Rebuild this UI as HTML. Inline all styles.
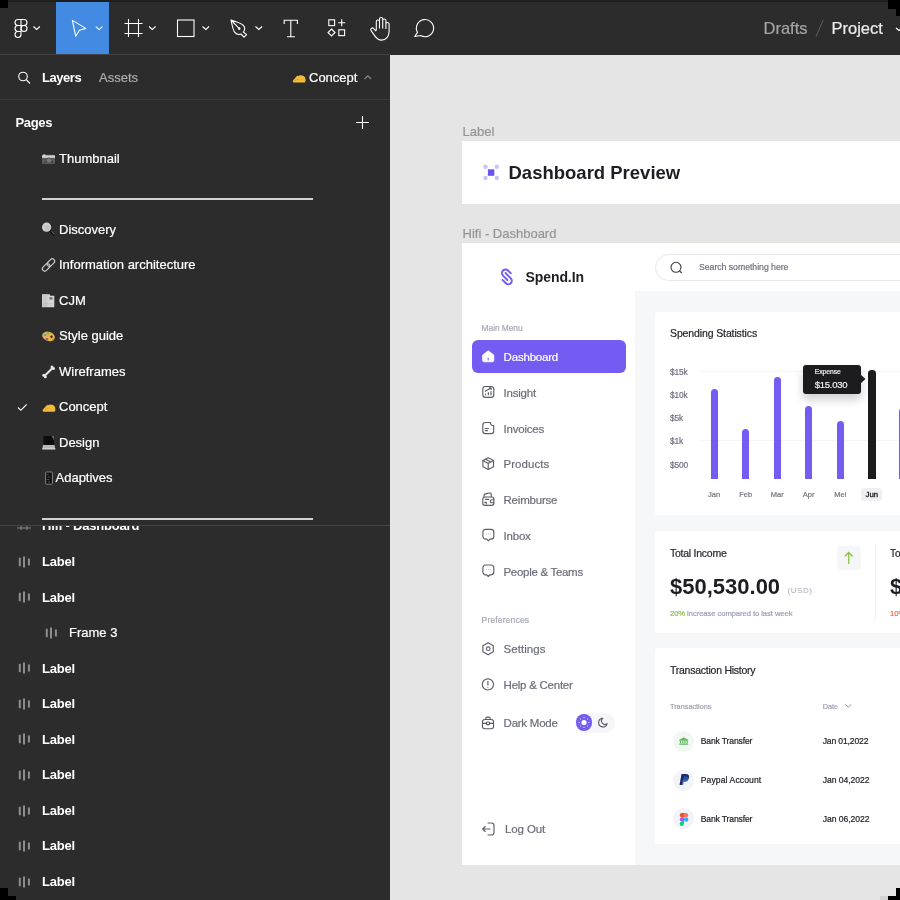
<!DOCTYPE html>
<html><head><meta charset="utf-8">
<style>
*{margin:0;padding:0;box-sizing:border-box}
html,body{width:900px;height:900px;overflow:hidden;background:#2c2c2c;font-family:"Liberation Sans",sans-serif;-webkit-font-smoothing:antialiased}

.a{position:absolute}
.t{position:absolute;white-space:nowrap;line-height:1;-webkit-text-stroke:0.2px currentColor}
svg{position:absolute;overflow:visible}
.ic{stroke:#fff;fill:none;stroke-width:1.1}
</style></head><body><div id="root" style="position:absolute;left:0;top:0;width:900px;height:900px;will-change:transform">
<!-- TOOLBAR -->
<div class="a" style="left:0;top:0;width:900px;height:54px;background:#2c2c2c"></div>
<div class="a" style="left:0;top:0;width:900px;height:1.5px;background:#1e1e1e"></div>
<div class="a" style="left:0;top:54px;width:390px;height:1px;background:#444"></div>
<div class="a" style="left:0;top:0;width:8px;height:7.5px;background:#000"></div>
<div class="a" style="left:888px;top:0;width:12px;height:9px;background:#000"></div><div class="a" style="left:896.3px;top:0;width:4px;height:15.8px;background:#000"></div>
<div class="a" style="left:56px;top:2px;width:53px;height:52px;background:#438ae2"></div>

<!-- figma logo -->
<svg style="left:0;top:0" width="60" height="55" class="ic">
  <path d="M21 19.5h3a3 3 0 0 1 0 6h-3zM21 19.5h-3a3 3 0 0 0 0 6h3zM21 25.5h-3a3 3 0 0 0 0 6h3zM21 31.5h-3a3 3 0 1 0 3 3zM21 25.5v6" class="ic"/>
  <circle cx="24" cy="28.5" r="3" class="ic"/>
  <path d="M33.5 26.5l3.2 3 3.2-3" class="ic"/>
</svg>
<!-- move -->
<svg style="left:0;top:0" width="120" height="55">
  <path d="M72.4 20.4L85.8 28.4L79.4 30.2L75.7 36.3z" class="ic" stroke-linejoin="round" stroke-width="1.2"/>
  <path d="M95.8 26.6l3.3 3 3.3-3" class="ic"/>
</svg>
<!-- frame -->
<svg style="left:0;top:0" width="300" height="55">
  <path d="M128.5 19v18M138.5 19v18M124.5 23.5h18M124.5 33.5h18" class="ic" stroke-width="1.15"/>
  <path d="M149 26.5l3.3 3 3.3-3" class="ic"/>
  <rect x="177.5" y="20" width="16.5" height="16.5" class="ic"/>
  <path d="M202.5 26.5l3.3 3 3.3-3" class="ic"/>
  <path d="M231 20C236 21.5 241 23 243.3 25.3C245.3 27.5 245 30 243.3 32L246.6 34.6L244 37.2L241 34C238.7 35 236.2 34.2 234.6 32.2C233 30 232 25 231 20zM231 20L238.8 28.2" class="ic" stroke-linejoin="round"/>
  <circle cx="239.2" cy="28.6" r="1.3" fill="#fff"/>
  <path d="M255.5 26.5l3.3 3 3.3-3" class="ic"/>
</svg>
<svg style="left:0;top:0" width="450" height="55">
  <path d="M284.2 24V20.2H297.4V24M290.8 20.2V36.7M287 36.7H295" class="ic" stroke-width="1.3"/>
  <rect x="328.8" y="19.8" width="5.8" height="5.8" class="ic"/>
  <path d="M341.7 19.3v7M338.2 22.8h7" class="ic"/>
  <path d="M331.5 29l3.5 3.5-3.5 3.5-3.5-3.5z" class="ic"/>
  <rect x="338.8" y="29.8" width="5.8" height="5.8" class="ic"/>
  <g transform="translate(-0.7,0.6)"><path d="M377 30v-9a1.6 1.6 0 0 1 3.2 0v7M380.2 27.5v-9a1.6 1.6 0 0 1 3.2 0v9M383.4 28v-8a1.6 1.6 0 0 1 3.2 0v8.5M386.6 28.5v-5a1.6 1.6 0 0 1 3.2 0v7.5c0 5-3 8.5-7.5 8.5c-3 0-5-1.5-7-4.5l-3.5-5a1.6 1.6 0 0 1 2.5-2l2.5 2.5" class="ic" stroke-linejoin="round"/></g>
  <path d="M414.7 36.5L417.55 32.4A8.6 8.6 0 1 1 420.7 35.55Z" class="ic" stroke-linejoin="round" stroke-width="1.2"/>
</svg>
<svg style="left:0;top:0" width="900" height="55"><path d="M816 36.7l7.3-17" stroke="#5e5e5e" stroke-width="1"/><path d="M896 28l3 2.5 3-2.5" class="ic"/></svg>

<div class="t" style="left:763.5px;top:20.33px;font-size:16.5px;color:#a5a5a5;">Drafts</div>
<div class="t" style="left:831.5px;top:20.33px;font-size:16.5px;color:#ececec;">Project</div>
<div class="a" style="left:0px;top:55px;width:390px;height:845px;background:#2c2c2c;"></div>
<div class="a" style="left:0px;top:54px;width:390px;height:1px;background:#444;"></div>
<div class="a" style="left:390px;top:55px;width:510px;height:845px;background:#e5e5e5;"></div>
<div class="a" style="left:0px;top:99.2px;width:390px;height:1.3px;background:#3b3b3b;"></div>
<svg style="left:0;top:0" width="390" height="140"><circle cx="23" cy="76.5" r="4.3" class="ic" stroke-width="1.3"/><path d="M26.2 79.7l3.8 3.8" class="ic" stroke-width="1.3"/><path d="M364.5 79l3.3-3.2 3.3 3.2" stroke="#8a8a8a" fill="none" stroke-width="1.1"/><path d="M362.5 116v13M356 122.5h13" class="ic" stroke-width="1.2"/></svg>
<div class="t" style="left:42px;top:71.00px;font-size:13px;color:#fff;font-weight:bold;-webkit-text-stroke:0;letter-spacing:-0.45px;">Layers</div>
<div class="t" style="left:99px;top:71.00px;font-size:13px;color:#acacac;">Assets</div>
<div class="t" style="left:309px;top:71.00px;font-size:13px;color:#fff;">Concept</div>
<div class="t" style="left:15.5px;top:116.00px;font-size:13px;color:#fff;font-weight:bold;-webkit-text-stroke:0;letter-spacing:-0.35px;">Pages</div>
<div class="t" style="left:59px;top:151.50px;font-size:13px;color:#fff;">Thumbnail</div>
<div class="a" style="left:42px;top:198.0px;width:271px;height:2px;background:#d2d2d2;"></div>
<div class="t" style="left:59px;top:222.60px;font-size:13px;color:#fff;">Discovery</div>
<div class="t" style="left:59px;top:258.15px;font-size:13px;color:#fff;">Information architecture</div>
<div class="t" style="left:59px;top:293.70px;font-size:13px;color:#fff;">CJM</div>
<div class="t" style="left:59px;top:329.25px;font-size:13px;color:#fff;">Style guide</div>
<div class="t" style="left:59px;top:364.80px;font-size:13px;color:#fff;">Wireframes</div>
<div class="t" style="left:59px;top:400.35px;font-size:13px;color:#fff;">Concept</div>
<div class="t" style="left:59px;top:435.90px;font-size:13px;color:#fff;">Design</div>
<div class="t" style="left:55.5px;top:471.45px;font-size:13px;color:#fff;">Adaptives</div>
<div class="a" style="left:42px;top:518.2px;width:271px;height:2px;background:#d2d2d2;"></div>
<svg style="left:0;top:0" width="60" height="420"><path d="M18 407.5l2.8 2.8 5.8-5.8" class="ic" stroke-width="1.9"/></svg>
<div class="a" style="left:0px;top:525px;width:390px;height:1px;background:#444;"></div>
<div class="a" style="left:0;top:526px;width:390px;height:10px;overflow:hidden"><div class="t" style="left:42px;top:-6.60px;font-size:13px;color:#fff;font-weight:bold;-webkit-text-stroke:0;letter-spacing:-0.2px;">Hifi - Dashboard</div>
<svg style="left:0;top:0" width="40" height="10"><path d="M21 -5v9M27 -5v9M17 -2h14M17 2h14" stroke="#888" stroke-width="1"/></svg></div>
<div class="t" style="left:42px;top:555.00px;font-size:13px;color:#fff;font-weight:bold;-webkit-text-stroke:0;letter-spacing:-0.2px;">Label</div>
<svg style="left:18px;top:555.70px" width="14" height="12"><path d="M1.8 1.8v8.5M6 0.5v11M10.9 2.5v7" stroke="#8d8d8d" stroke-width="2"/></svg>
<div class="t" style="left:42px;top:590.55px;font-size:13px;color:#fff;font-weight:bold;-webkit-text-stroke:0;letter-spacing:-0.2px;">Label</div>
<svg style="left:18px;top:591.25px" width="14" height="12"><path d="M1.8 1.8v8.5M6 0.5v11M10.9 2.5v7" stroke="#8d8d8d" stroke-width="2"/></svg>
<div class="t" style="left:69px;top:626.10px;font-size:13px;color:#fff;">Frame 3</div>
<svg style="left:45px;top:626.80px" width="14" height="12"><path d="M1.8 1.8v8.5M6 0.5v11M10.9 2.5v7" stroke="#8d8d8d" stroke-width="2"/></svg>
<div class="t" style="left:42px;top:661.65px;font-size:13px;color:#fff;font-weight:bold;-webkit-text-stroke:0;letter-spacing:-0.2px;">Label</div>
<svg style="left:18px;top:662.35px" width="14" height="12"><path d="M1.8 1.8v8.5M6 0.5v11M10.9 2.5v7" stroke="#8d8d8d" stroke-width="2"/></svg>
<div class="t" style="left:42px;top:697.20px;font-size:13px;color:#fff;font-weight:bold;-webkit-text-stroke:0;letter-spacing:-0.2px;">Label</div>
<svg style="left:18px;top:697.90px" width="14" height="12"><path d="M1.8 1.8v8.5M6 0.5v11M10.9 2.5v7" stroke="#8d8d8d" stroke-width="2"/></svg>
<div class="t" style="left:42px;top:732.75px;font-size:13px;color:#fff;font-weight:bold;-webkit-text-stroke:0;letter-spacing:-0.2px;">Label</div>
<svg style="left:18px;top:733.45px" width="14" height="12"><path d="M1.8 1.8v8.5M6 0.5v11M10.9 2.5v7" stroke="#8d8d8d" stroke-width="2"/></svg>
<div class="t" style="left:42px;top:768.30px;font-size:13px;color:#fff;font-weight:bold;-webkit-text-stroke:0;letter-spacing:-0.2px;">Label</div>
<svg style="left:18px;top:769.00px" width="14" height="12"><path d="M1.8 1.8v8.5M6 0.5v11M10.9 2.5v7" stroke="#8d8d8d" stroke-width="2"/></svg>
<div class="t" style="left:42px;top:803.85px;font-size:13px;color:#fff;font-weight:bold;-webkit-text-stroke:0;letter-spacing:-0.2px;">Label</div>
<svg style="left:18px;top:804.55px" width="14" height="12"><path d="M1.8 1.8v8.5M6 0.5v11M10.9 2.5v7" stroke="#8d8d8d" stroke-width="2"/></svg>
<div class="t" style="left:42px;top:839.40px;font-size:13px;color:#fff;font-weight:bold;-webkit-text-stroke:0;letter-spacing:-0.2px;">Label</div>
<svg style="left:18px;top:840.10px" width="14" height="12"><path d="M1.8 1.8v8.5M6 0.5v11M10.9 2.5v7" stroke="#8d8d8d" stroke-width="2"/></svg>
<div class="t" style="left:42px;top:874.95px;font-size:13px;color:#fff;font-weight:bold;-webkit-text-stroke:0;letter-spacing:-0.2px;">Label</div>
<svg style="left:18px;top:875.65px" width="14" height="12"><path d="M1.8 1.8v8.5M6 0.5v11M10.9 2.5v7" stroke="#8d8d8d" stroke-width="2"/></svg>
<svg style="left:0;top:0" width="390" height="500"><rect x="42" y="154.8" width="13" height="9.3" rx="1" fill="#5a5a5a"/><rect x="42" y="155.3" width="13" height="2.6" fill="#cfcfcf"/><rect x="43" y="154.5" width="2.5" height="1.2" fill="#e0e0e0"/><circle cx="49" cy="160.5" r="2.6" fill="#7a7a7a" stroke="#4a4a4a" stroke-width="0.8"/><path d="M44.5 163.2l1.5-1.5M53 163.2l-1.5-1.5" stroke="#222" stroke-width="1"/><path d="M50.2 230.8l3.6 3.8" stroke="#111" stroke-width="2" stroke-linecap="round"/><path d="M51.5 231.2l2.9 3" stroke="#bbb" stroke-width="0.6"/><circle cx="46.6" cy="227.2" r="4.6" fill="#d2d2d2"/><circle cx="47" cy="227.6" r="2.8" fill="#c4c4c4"/><g transform="rotate(-45 48.5 265)"><rect x="40.8" y="262.6" width="8.6" height="4.8" rx="2.4" fill="none" stroke="#cdcdcd" stroke-width="1.1"/><rect x="47.6" y="262.6" width="8.6" height="4.8" rx="2.4" fill="none" stroke="#cdcdcd" stroke-width="1.1"/></g><path d="M42 294.2h7.5l1 1.5h3.8v11.6h-12.3z" fill="#d6d6d6"/><rect x="42.5" y="294.5" width="5" height="12.5" fill="#c8c8c8"/><rect x="49.5" y="297.3" width="3" height="2.2" fill="#6a6a6a"/><path d="M43 303.5h10M43 305.3h10" stroke="#bdbdbd" stroke-width="0.6"/><ellipse cx="48.5" cy="336.4" rx="6.5" ry="4.6" transform="rotate(18 48.5 336.4)" fill="#e8b44c"/><circle cx="45" cy="335" r="1.3" fill="#4fa3c7"/><circle cx="48" cy="333.2" r="1.2" fill="#7cb342"/><circle cx="47" cy="339" r="1.3" fill="#9b59b6"/><circle cx="51.5" cy="336.8" r="1.2" fill="#3a2a1a"/><circle cx="53" cy="339.4" r="1" fill="#e67e22"/><path d="M45 375.5l7.3-7.3" stroke="#e8e8e8" stroke-width="2"/><circle cx="43.8" cy="375.2" r="1.5" fill="#e8e8e8"/><circle cx="45.3" cy="376.7" r="1.5" fill="#e8e8e8"/><circle cx="52" cy="366.9" r="1.5" fill="#e8e8e8"/><circle cx="53.5" cy="368.4" r="1.5" fill="#e8e8e8"/><g transform="translate(42.3,401.8)"><path d="M0.5 8L3.5 4.5C4.5 3 6 2.5 8 2.8L10.5 3.2C12 3.5 12.8 5 13 6.5L13 8.5C13 9.5 12.3 10 11 10L1.5 10C0.5 10 0 9 0.5 8z" fill="#f2bc3a"/><path d="M2.5 8.3c1-1 2.5-1.5 4-1.6" stroke="#d89b20" stroke-width="0.7" fill="none"/><path d="M5.5 3.5l4-3.5" stroke="#222" stroke-width="0.9"/></g><rect x="43.5" y="436" width="10.5" height="8.8" fill="#0c0c0c"/><path d="M51.5 436h2.5v4z" fill="#666"/><path d="M43 445h11.5l0.8 4h-13z" fill="#b8b8b8"/><rect x="42.3" y="448.3" width="13" height="1.2" fill="#dcdcdc"/><rect x="45.6" y="472" width="6.8" height="12.2" rx="0.8" fill="#111" stroke="#9a9a9a" stroke-width="0.8"/><path d="M46.8 474.5h2M47.5 477h3M46.8 479.5h2.5M48 482h2" stroke="#777" stroke-width="0.6"/><g transform="translate(292.5,72.5)"><path d="M0.5 8L3.5 4.5C4.5 3 6 2.5 8 2.8L10.5 3.2C12 3.5 12.8 5 13 6.5L13 8.5C13 9.5 12.3 10 11 10L1.5 10C0.5 10 0 9 0.5 8z" fill="#f2bc3a"/><path d="M2.5 8.3c1-1 2.5-1.5 4-1.6" stroke="#d89b20" stroke-width="0.7" fill="none"/><path d="M5.5 3.5l4-3.5" stroke="#222" stroke-width="0.9"/></g></svg>
<div class="t" style="left:462.5px;top:125.00px;font-size:13px;color:#959595;">Label</div>
<div class="a" style="left:462px;top:141px;width:438px;height:63px;background:#fff;"></div>
<svg style="left:0;top:0" width="900" height="300"><circle cx="485.5" cy="166.8" r="2.2" fill="#c9c2f7"/><circle cx="496.8" cy="166.8" r="2.2" fill="#c9c2f7"/><circle cx="485.5" cy="178" r="2.2" fill="#c9c2f7"/><circle cx="496.8" cy="178" r="2.2" fill="#c9c2f7"/><rect x="487.9" y="169.3" width="6.4" height="6.5" fill="#6a55ec"/></svg>
<div class="t" style="left:508.5px;top:163.54px;font-size:18.5px;color:#1d1d24;font-weight:bold;-webkit-text-stroke:0;">Dashboard Preview</div>
<div class="t" style="left:462.5px;top:227.00px;font-size:13px;color:#959595;">Hifi - Dashboard</div>
<div class="a" style="left:462px;top:243px;width:438px;height:622px;background:#fff;"></div>
<div class="a" style="left:634.5px;top:291px;width:265.5px;height:574px;background:#f6f7f9;"></div>
<div class="a" style="left:655px;top:254px;width:300px;height:26.5px;border:1px solid #e6e7ec;border-radius:14px;background:#fff"></div>
<svg style="left:0;top:0" width="900" height="300"><circle cx="676" cy="267.3" r="5" fill="none" stroke="#3a3b45" stroke-width="1.1"/><path d="M679.7 271l2 2" stroke="#3a3b45" stroke-width="1.1"/></svg>
<div class="t" style="left:699px;top:263.04px;font-size:8.7px;color:#6e7086;letter-spacing:-0.02px;">Search something here</div>
<svg style="left:0;top:0" width="900" height="300"><g transform="matrix(0.7071,0.7071,0.7071,-0.7071,0,0)" fill="none" stroke="#745cf2" stroke-width="1.9" stroke-linecap="round"><path d="M554.5 167.9L550.5 167.9A3.55 3.55 0 0 1 550.5 160.8L556.8 160.8"/><path d="M550.5 164.4L558 164.4A3.5 3.5 0 0 0 558 157.4L553.2 157.4"/></g></svg>
<div class="t" style="left:525.6px;top:270.15px;font-size:14px;color:#1d1d24;font-weight:bold;-webkit-text-stroke:0;letter-spacing:-0.1px;">Spend.In</div>
<div class="t" style="left:481.6px;top:324.09px;font-size:8.4px;color:#a7a9b6;letter-spacing:-0.05px;">Main Menu</div>
<div class="a" style="left:472px;top:339.6px;width:154px;height:33px;background:#745cf2;border-radius:6px;"></div>
<div class="t" style="left:503.6px;top:352.27px;font-size:11.5px;color:#fff;letter-spacing:-0.2px;">Dashboard</div>
<div class="t" style="left:503.5px;top:388.07px;font-size:11.5px;color:#6b6d7b;letter-spacing:-0.2px;">Insight</div>
<div class="t" style="left:503.5px;top:423.87px;font-size:11.5px;color:#6b6d7b;letter-spacing:-0.2px;">Invoices</div>
<div class="t" style="left:503.5px;top:459.27px;font-size:11.5px;color:#6b6d7b;letter-spacing:0.05px;">Products</div>
<div class="t" style="left:503.5px;top:494.87px;font-size:11.5px;color:#6b6d7b;letter-spacing:-0.2px;">Reimburse</div>
<div class="t" style="left:503.5px;top:530.97px;font-size:11.5px;color:#6b6d7b;letter-spacing:-0.2px;">Inbox</div>
<div class="t" style="left:503.5px;top:566.67px;font-size:11.5px;color:#6b6d7b;letter-spacing:-0.3px;">People &amp; Teams</div>
<div class="t" style="left:481.6px;top:616.12px;font-size:8.6px;color:#a7a9b6;letter-spacing:0.12px;">Preferences</div>
<div class="t" style="left:503.6px;top:644.47px;font-size:11.5px;color:#6b6d7b;letter-spacing:0.05px;">Settings</div>
<div class="t" style="left:503.6px;top:679.97px;font-size:11.5px;color:#6b6d7b;letter-spacing:-0.25px;">Help &amp; Center</div>
<div class="t" style="left:503.6px;top:718.37px;font-size:11.5px;color:#6b6d7b;letter-spacing:-0.25px;">Dark Mode</div>
<div class="t" style="left:505px;top:824.17px;font-size:11.5px;color:#6b6d7b;letter-spacing:-0.1px;">Log Out</div>
<div class="a" style="left:575px;top:712.5px;width:40px;height:20px;border-radius:10px;background:#f6f6f8"></div>
<div class="a" style="left:575.7px;top:714.2px;width:16.6px;height:16.6px;border-radius:9px;background:#745cf2"></div>
<svg style="left:0;top:0" width="900" height="900"><circle cx="584" cy="722.5" r="2.6" fill="#fff"/><circle cx="588.90" cy="722.50" r="0.55" fill="#fff"/><circle cx="587.46" cy="725.96" r="0.55" fill="#fff"/><circle cx="584.00" cy="727.40" r="0.55" fill="#fff"/><circle cx="580.54" cy="725.96" r="0.55" fill="#fff"/><circle cx="579.10" cy="722.50" r="0.55" fill="#fff"/><circle cx="580.54" cy="719.04" r="0.55" fill="#fff"/><circle cx="584.00" cy="717.60" r="0.55" fill="#fff"/><circle cx="587.46" cy="719.04" r="0.55" fill="#fff"/></svg>
<div class="a" style="left:655px;top:311.5px;width:245px;height:203px;background:#fff;border-radius:3px 0 0 3px;"></div>
<div class="a" style="left:655px;top:530.5px;width:245px;height:102px;background:#fff;border-radius:3px 0 0 3px;"></div>
<div class="a" style="left:654.5px;top:648px;width:245.5px;height:196px;background:#fff;border-radius:3px 0 0 3px;"></div>
<div class="t" style="left:670px;top:328.11px;font-size:10.5px;color:#25252d;letter-spacing:-0.12px;-webkit-text-stroke:0.2px #25252d;">Spending Statistics</div>
<div class="t" style="left:670px;top:368.49px;font-size:8.4px;color:#707180;letter-spacing:-0.15px;">$15k</div>
<div class="t" style="left:670px;top:391.39px;font-size:8.4px;color:#707180;letter-spacing:-0.15px;">$10k</div>
<div class="t" style="left:670px;top:414.39px;font-size:8.4px;color:#707180;letter-spacing:-0.15px;">$5k</div>
<div class="t" style="left:670px;top:437.49px;font-size:8.4px;color:#707180;letter-spacing:-0.15px;">$1k</div>
<div class="t" style="left:670px;top:460.79px;font-size:8.4px;color:#707180;letter-spacing:-0.15px;">$500</div>
<div class="a" style="left:700px;top:370.8px;width:200px;height:1px;background:#f5f5f7;"></div>
<div class="a" style="left:700px;top:440px;width:200px;height:1px;background:#f5f5f7;"></div>
<div class="a" style="left:710.5px;top:389.4px;width:7.2px;height:89.80000000000001px;background:#745cf2;border-radius:3.6px 3.6px 0 0;"></div>
<div class="a" style="left:742px;top:429.4px;width:7.2px;height:49.80000000000001px;background:#745cf2;border-radius:3.6px 3.6px 0 0;"></div>
<div class="a" style="left:773.6px;top:377.2px;width:7.2px;height:102.0px;background:#745cf2;border-radius:3.6px 3.6px 0 0;"></div>
<div class="a" style="left:805px;top:406px;width:7.2px;height:73.19999999999999px;background:#745cf2;border-radius:3.6px 3.6px 0 0;"></div>
<div class="a" style="left:836.7px;top:420.8px;width:7.2px;height:58.39999999999998px;background:#745cf2;border-radius:3.6px 3.6px 0 0;"></div>
<div class="a" style="left:868.3px;top:370px;width:7.3px;height:109.2px;background:#1c1c1e;border-radius:3.6px 3.6px 0 0;"></div>
<div class="a" style="left:898.6px;top:408px;width:7.2px;height:71.2px;background:#745cf2;border-radius:3.6px 3.6px 0 0;"></div>
<div class="t" style="left:694.1px;width:40px;text-align:center;top:490.85px;font-size:7.5px;color:#737482">Jan</div>
<div class="t" style="left:725.6px;width:40px;text-align:center;top:490.85px;font-size:7.5px;color:#737482">Feb</div>
<div class="t" style="left:757.2px;width:40px;text-align:center;top:490.85px;font-size:7.5px;color:#737482">Mar</div>
<div class="t" style="left:788.6px;width:40px;text-align:center;top:490.85px;font-size:7.5px;color:#737482">Apr</div>
<div class="t" style="left:820.3px;width:40px;text-align:center;top:490.85px;font-size:7.5px;color:#737482">Mei</div>
<div class="a" style="left:860.7px;top:487.8px;width:21.8px;height:13.2px;background:#efeff1;border-radius:3px;"></div>
<div class="t" style="left:851.9px;width:40px;text-align:center;top:490.85px;font-size:7.8px;color:#1d1d24;-webkit-text-stroke:0.35px #1d1d24">Jun</div>
<div class="a" style="left:803.3px;top:365.3px;width:57.7px;height:28.3px;background:#1c1c1e;border-radius:3px;box-shadow:0 6px 10px rgba(0,0,0,0.18);"></div>
<svg style="left:0;top:0" width="900" height="400"><path d="M860.5 374.5l5 4.5-5 4.5z" fill="#1c1c1e"/></svg>
<div class="t" style="left:814.7px;top:369.24px;font-size:6.8px;color:#f0f0f0;letter-spacing:-0.05px;">Expense</div>
<div class="t" style="left:814.7px;top:379.76px;font-size:9.5px;color:#f0f0f0;letter-spacing:-0.25px;">$15.030</div>
<div class="t" style="left:670px;top:548.31px;font-size:10.5px;color:#25252d;letter-spacing:-0.25px;-webkit-text-stroke:0.2px #25252d;">Total Income</div>
<div class="a" style="left:836.5px;top:546.2px;width:24.5px;height:24px;background:#f5f6f8;border-radius:4px;"></div>
<svg style="left:0;top:0" width="900" height="600"><path d="M848.7 564v-11.5M844.7 556.5l4-4 4 4" fill="none" stroke="#8bc34a" stroke-width="1.3"/></svg>
<div class="a" style="left:875px;top:545px;width:1px;height:75px;background:#f0f0f4;"></div>
<div class="t" style="left:890px;top:548.74px;font-size:10px;color:#1d1d24;">To</div>
<div class="t" style="left:670px;top:575.88px;font-size:22px;color:#1d1d24;font-weight:bold;-webkit-text-stroke:0;">$50,530.00</div>
<div class="t" style="left:890px;top:575.88px;font-size:22px;color:#1d1d24;font-weight:bold;-webkit-text-stroke:0;">$</div>
<div class="t" style="left:787.4px;top:587.23px;font-size:8px;color:#a9abb8;letter-spacing:0.6px;-webkit-text-stroke:0;">(USD)</div>
<div class="t" style="left:670px;top:609.57px;font-size:7.6px;color:#9b9db0;letter-spacing:-0.05px;"><span style="color:#8bc34a">20%</span> increase compared to last week</div>
<div class="t" style="left:890px;top:609.57px;font-size:7.6px;color:#ee6446;">10%</div>
<div class="t" style="left:670px;top:664.61px;font-size:10.5px;color:#25252d;letter-spacing:-0.25px;-webkit-text-stroke:0.2px #25252d;">Transaction History</div>
<div class="t" style="left:670px;top:702.62px;font-size:7.3px;color:#a0a2b0;">Transactions</div>
<div class="t" style="left:822.7px;top:702.62px;font-size:7.3px;color:#a0a2b0;">Date</div>
<svg style="left:0;top:0" width="900" height="720"><path d="M845.5 704.5l2.8 2.6 2.8-2.6" fill="none" stroke="#8a8ca0" stroke-width="1"/></svg>
<div class="a" style="left:672.9px;top:730.5px;width:21px;height:21px;border-radius:11px;background:#f1f8f1"></div>
<div class="t" style="left:700.7px;top:737.32px;font-size:8.6px;color:#1d1d24;letter-spacing:-0.15px;">Bank Transfer</div>
<div class="t" style="left:822.7px;top:737.32px;font-size:8.6px;color:#1d1d24;letter-spacing:-0.15px;">Jan 01,2022</div>
<div class="a" style="left:672.9px;top:769.7px;width:21px;height:21px;border-radius:11px;background:#f2f4fa"></div>
<div class="t" style="left:700.7px;top:776.22px;font-size:8.6px;color:#1d1d24;letter-spacing:0.1px;">Paypal Account</div>
<div class="t" style="left:822.7px;top:776.22px;font-size:8.6px;color:#1d1d24;letter-spacing:-0.05px;">Jan 04,2022</div>
<div class="a" style="left:672.9px;top:808.1px;width:21px;height:21px;border-radius:11px;background:#f2f3f6"></div>
<div class="t" style="left:700.7px;top:815.12px;font-size:8.6px;color:#1d1d24;letter-spacing:-0.15px;">Bank Transfer</div>
<div class="t" style="left:822.7px;top:815.12px;font-size:8.6px;color:#1d1d24;letter-spacing:-0.05px;">Jan 06,2022</div>
<svg style="left:0;top:0" width="900" height="900"><path d="M488.2 350.8l5.6 4.2v5.2a1.6 1.6 0 0 1-1.6 1.6h-8a1.6 1.6 0 0 1-1.6-1.6v-5.2z" fill="#fff" stroke="#fff" stroke-width="0.8" stroke-linejoin="round"/><rect x="487.5" y="357.8" width="1.4" height="2.6" fill="#8d82f0"/><rect x="482.8" y="386.5" width="11" height="10.8" rx="2.6" fill="none" stroke="#5b5d6a" stroke-width="1.15" stroke-linecap="round" stroke-linejoin="round"/><path d="M485.6 394.8v-0.8M488.3 394.8v-2.2M491 394.8v-3.2M485.3 391.2l5.6-3.2M489.5 387.9h1.6v1.5" fill="none" stroke="#5b5d6a" stroke-width="1.15" stroke-linecap="round" stroke-linejoin="round"/><path d="M490.5 422.5h-5a2.7 2.7 0 0 0-2.7 2.7v5.7a2.7 2.7 0 0 0 2.7 2.7h5.5a2.7 2.7 0 0 0 2.7-2.7v-5.2" fill="none" stroke="#5b5d6a" stroke-width="1.15" stroke-linecap="round" stroke-linejoin="round"/><path d="M490.5 422.5a3.2 3.2 0 0 0 3.2 3.2" fill="none" stroke="#5b5d6a" stroke-width="1.15" stroke-linecap="round" stroke-linejoin="round"/><path d="M485.3 428.5h3.3M485.3 430.6h2.2" fill="none" stroke="#5b5d6a" stroke-width="1.15" stroke-linecap="round" stroke-linejoin="round"/><path d="M488.2 457.8l5.3 2.8v6.1l-5.3 2.8-5.3-2.8v-6.1z" fill="none" stroke="#5b5d6a" stroke-width="1.15" stroke-linecap="round" stroke-linejoin="round"/><path d="M482.9 460.6l5.3 2.8 5.3-2.8M488.2 463.4v6.1M485.5 459.2l5.3 2.8" fill="none" stroke="#5b5d6a" stroke-width="1.15" stroke-linecap="round" stroke-linejoin="round"/><path d="M484 497.2v-1.5a1.8 1.8 0 0 1 1.4-1.8l4.3-1a1.2 1.2 0 0 1 1.5 1.2v2.9" fill="none" stroke="#5b5d6a" stroke-width="1.15" stroke-linecap="round" stroke-linejoin="round"/><rect x="482.8" y="497" width="11" height="8.3" rx="2" fill="none" stroke="#5b5d6a" stroke-width="1.15" stroke-linecap="round" stroke-linejoin="round"/><path d="M493.8 499.7h-2a1.5 1.5 0 0 0 0 3h2M485.3 499.4h3.5M484.8 502.4h1.5v1.5" fill="none" stroke="#5b5d6a" stroke-width="1.15" stroke-linecap="round" stroke-linejoin="round"/><path d="M485.6 529.3h5.5a2.7 2.7 0 0 1 2.7 2.7v4.4a2.7 2.7 0 0 1-2.7 2.7h-1.3l-1.5 1.7-1.5-1.7h-1.2a2.7 2.7 0 0 1-2.7-2.7v-4.4a2.7 2.7 0 0 1 2.7-2.7z" fill="none" stroke="#5b5d6a" stroke-width="1.15" stroke-linecap="round" stroke-linejoin="round"/><circle cx="486.3" cy="533.9" r="0.45" fill="#5b5d6a"/><circle cx="488.3" cy="533.9" r="0.45" fill="#5b5d6a"/><circle cx="490.3" cy="533.9" r="0.45" fill="#5b5d6a"/><path d="M485.6 565.0h5.5a2.7 2.7 0 0 1 2.7 2.7v4.4a2.7 2.7 0 0 1-2.7 2.7h-1.3l-1.5 1.7-1.5-1.7h-1.2a2.7 2.7 0 0 1-2.7-2.7v-4.4a2.7 2.7 0 0 1 2.7-2.7z" fill="none" stroke="#5b5d6a" stroke-width="1.15" stroke-linecap="round" stroke-linejoin="round"/><circle cx="486.3" cy="569.6" r="0.45" fill="#5b5d6a"/><circle cx="488.3" cy="569.6" r="0.45" fill="#5b5d6a"/><circle cx="490.3" cy="569.6" r="0.45" fill="#5b5d6a"/><path d="M488.1 642.8l5.2 3v6l-5.2 3-5.2-3v-6z" fill="none" stroke="#5b5d6a" stroke-width="1.15" stroke-linecap="round" stroke-linejoin="round"/><circle cx="488.2" cy="648.7" r="1.8" fill="none" stroke="#5b5d6a" stroke-width="1.15" stroke-linecap="round" stroke-linejoin="round"/><circle cx="487.9" cy="684.4" r="5.6" fill="none" stroke="#5b5d6a" stroke-width="1.15" stroke-linecap="round" stroke-linejoin="round"/><path d="M487.9 681.6v3.4" fill="none" stroke="#5b5d6a" stroke-width="1.15" stroke-linecap="round" stroke-linejoin="round"/><circle cx="487.9" cy="687.2" r="0.5" fill="#5b5d6a"/><rect x="482.5" y="719.5" width="11" height="9.2" rx="2.2" fill="none" stroke="#5b5d6a" stroke-width="1.15" stroke-linecap="round" stroke-linejoin="round"/><path d="M485.8 719.5v-1.2a1.2 1.2 0 0 1 1.2-1.2h2a1.2 1.2 0 0 1 1.2 1.2v1.2M482.5 723.3h3.8M489.7 723.3h3.8" fill="none" stroke="#5b5d6a" stroke-width="1.15" stroke-linecap="round" stroke-linejoin="round"/><rect x="486.3" y="722" width="3.4" height="2.6" rx="1" fill="none" stroke="#5b5d6a" stroke-width="1.15" stroke-linecap="round" stroke-linejoin="round"/><path d="M488 823h3.5a2.5 2.5 0 0 1 2.5 2.5v7a2.5 2.5 0 0 1-2.5 2.5h-3.5" fill="none" stroke="#5b5d6a" stroke-width="1.15" stroke-linecap="round" stroke-linejoin="round"/><path d="M490 829h-7.3M485.2 826.5l-2.5 2.5 2.5 2.5" fill="none" stroke="#5b5d6a" stroke-width="1.15" stroke-linecap="round" stroke-linejoin="round"/><path d="M602.8 718.3a4.3 4.3 0 1 0 4.3 5.3a3.4 3.4 0 0 1-4.3-5.3z" fill="none" stroke="#5b5d6a" stroke-width="1.15" stroke-linecap="round" stroke-linejoin="round" stroke="#333"/></svg>
<svg style="left:0;top:0" width="900" height="900"><path d="M679.3 740.3l4.4-2.6 4.4 2.6z" fill="#5fb760" stroke="#5fb760" stroke-width="0.8" stroke-linejoin="round"/><path d="M680.5 741v2.3M682.8 741v2.3M685 741v2.3M687.2 741v2.3" stroke="#5fb760" stroke-width="1.2"/><rect x="679.2" y="743.5" width="9" height="1.3" rx="0.4" fill="#5fb760"/><path d="M681.5 774h4.5c2.3 0 3.5 1.3 3 3.4c-0.5 2.3-2.1 3.2-4.2 3.2h-1.8l-0.8 4.3h-2.7z" fill="#1f2a66"/><path d="M684 776.5h2.3c1.5 0 2.7 1 2.2 2.8c-0.4 1.7-1.7 2.6-3.5 2.6h-1.2l-0.7 3.1h-1.6z" fill="#2e5fb8" opacity="0.8"/><path d="M684 813h-2.17a2.17 2.17 0 0 0 0 4.33h2.17z" fill="#f24e1e"/><path d="M684 813h2.17a2.17 2.17 0 0 1 0 4.33h-2.17z" fill="#ff7262"/><path d="M684 817.33h-2.17a2.17 2.17 0 0 0 0 4.33h2.17z" fill="#a259ff"/><circle cx="686.17" cy="819.5" r="2.17" fill="#1abcfe"/><path d="M684 821.67h-2.17a2.17 2.17 0 1 0 2.17 2.17z" fill="#0acf83"/></svg>
<div class="a" style="left:0px;top:888px;width:8px;height:12px;background:#000;"></div>
<div class="a" style="left:0px;top:896px;width:16px;height:4px;background:#000;"></div>
<div class="a" style="left:896px;top:888px;width:4px;height:12px;background:#000;"></div>
<div class="a" style="left:888px;top:896px;width:12px;height:4px;background:#000;"></div>
<div class="a" style="left:880px;top:896px;width:8px;height:4px;background:#d2d2d2;"></div>
</div></body></html>
